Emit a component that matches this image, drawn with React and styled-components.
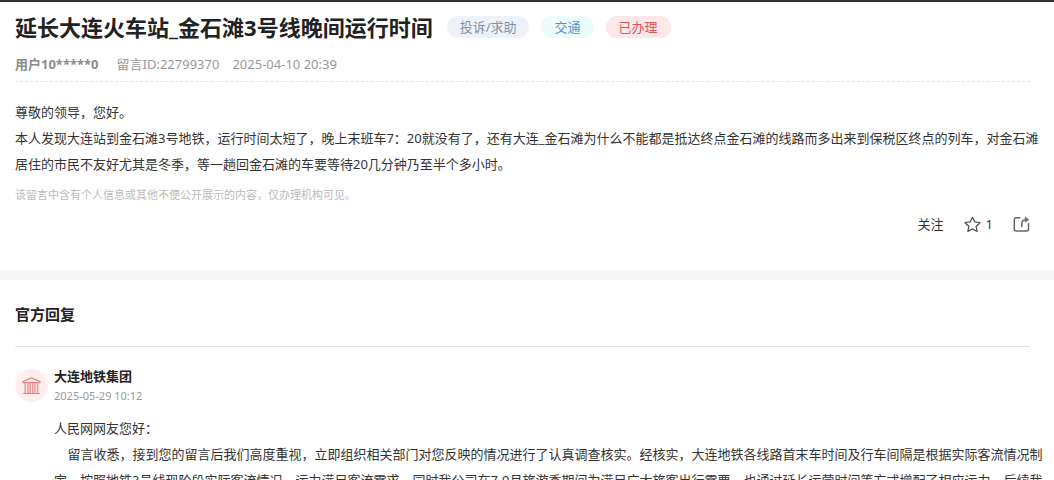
import React from 'react';
import styled, { createGlobalStyle } from 'styled-components';

const GlobalStyle = createGlobalStyle`
  * {
    box-sizing: border-box;
  }

  body {
    margin: 0;
    background: #fff;
    color: #333;
    font-family: "Noto Sans", "Noto Sans CJK SC", sans-serif;
    font-size: 13px;
    line-height: 26px;
  }
`;

// Layout
const Page = styled.main`
  height: 100vh;
  overflow: hidden;
  border-top: 2px solid #333132;
`;

const Message = styled.article`
  padding: 12px 24px 33px 15px;
  border-bottom: 10px solid #f6f7f9;
`;

const TitleRow = styled.header`
  display: flex;
  align-items: center;
  gap: 12px;
`;

const Title = styled.h1`
  margin: 0 2px 0 0;
  color: #222;
  font-size: 22px;
  line-height: 26px;
  font-weight: 700;
`;

const tones = {
  gray: { background: '#eff3f9', color: '#8291a3' },
  cyan: { background: '#ebfcfa', color: '#5a8fd0' },
  red: { background: '#fce8e9', color: '#dc5358' },
};

const Tag = styled.span`
  padding: 0 13px;
  border-radius: 11px;
  line-height: 22px;
  background: ${({ $tone }) => tones[$tone].background};
  color: ${({ $tone }) => tones[$tone].color};
`;

const Meta = styled.div`
  display: flex;
  gap: 13px;
  padding: 11px 0 4px;
  border-bottom: 1px dashed #e8e8e8;
  color: #999;
`;

const UserName = styled.strong`
  margin-right: 5px;
  color: #8c8c8c;
`;

const Text = styled.p`
  margin: 0 -15px 0 0;
  white-space: pre-wrap;
`;

const MessageText = styled(Text)`
  margin: 17px -12px 0 0;
`;

const Hint = styled.p`
  margin: 8px 0 0;
  color: #bbb;
  font-size: 11px;
  line-height: 20px;
`;

const Actions = styled.div`
  display: flex;
  justify-content: flex-end;
  align-items: center;
  gap: 20px;
  margin-top: 6px;
`;

const ActionButton = styled.button`
  display: flex;
  align-items: center;
  gap: 5px;
  padding: 0;
  border: 0;
  background: none;
  color: #333;
  font: inherit;
  cursor: pointer;
`;

const Replies = styled.section`
  padding: 21px 24px 0 15px;
`;

const SectionTitle = styled.h2`
  margin: 0;
  padding-bottom: 19px;
  border-bottom: 1px solid #e3e3e3;
  color: #222;
  font-size: 15px;
  line-height: 26px;
  font-weight: 700;
`;

const Reply = styled.article`
  display: flex;
  gap: 6px;
  padding-top: 19px;
`;

const Avatar = styled.div`
  display: flex;
  flex: none;
  align-items: center;
  justify-content: center;
  width: 33px;
  height: 33px;
  margin-top: 3px;
  border-radius: 50%;
  background: #ffeeed;
`;

const ReplyBody = styled.div`
  flex: 1;
  min-width: 0;
`;

const Department = styled.h3`
  margin: 0;
  color: #222;
  font-size: 13px;
  line-height: 20px;
  font-weight: 700;
`;

const ReplyTime = styled.time`
  display: block;
  margin-bottom: 9px;
  color: #999;
  font-size: 11px;
  line-height: 20px;
`;

// Icons
const StarIcon = () => (
  <svg width="17" height="17" viewBox="0 0 17 17" fill="none" stroke="#555" strokeWidth="1.3" strokeLinejoin="round" aria-hidden="true">
    <path d="M8.5 1.3 10.8 5.9 16 6.7 12.2 10.3 13.1 15.4 8.5 13 3.9 15.4 4.8 10.3 1 6.7 6.2 5.9Z" />
  </svg>
);

const ShareIcon = () => (
  <svg width="17" height="17" viewBox="0 0 17 17" fill="none" stroke="#666" strokeWidth="1.5" strokeLinecap="round" strokeLinejoin="round" aria-hidden="true">
    <path d="M6.8 1.8H3.2Q1.3 1.8 1.3 3.7V13Q1.3 15 3.2 15H13.6Q15.5 15 15.5 13V7.8" />
    <path d="M8.8 10.5V7.6Q8.8 4 12.4 3.7H14" />
    <path d="M12.4 1.2 15.8 3.8 12.4 6Z" fill="#666" strokeWidth="0.6" />
  </svg>
);

const BuildingIcon = () => (
  <svg width="19" height="18" viewBox="0 0 19 18" fill="none" stroke="#e58380" strokeWidth="1.2" aria-hidden="true">
    <path d="M1 5.7V4.5L9.5 1 18 4.5V5.7ZM1 16.5H18M3.2 6V16M6 6V16M8.2 6V16M10.8 6V16M13 6V16M15.8 6V16" />
  </svg>
);

function App() {
  return (
    <>
      <GlobalStyle />
      <Page>
        <Message>
          <TitleRow>
            <Title>延长大连火车站_金石滩3号线晚间运行时间</Title>
            <Tag $tone="gray">投诉/求助</Tag>
            <Tag $tone="cyan">交通</Tag>
            <Tag $tone="red">已办理</Tag>
          </TitleRow>
          <Meta>
            <UserName>用户10*****0</UserName>
            <span>留言ID:22799370</span>
            <time dateTime="2025-04-10T20:39">2025-04-10 20:39</time>
          </Meta>
          <MessageText>
            {'尊敬的领导，您好。\n本人发现大连站到金石滩3号地铁，运行时间太短了，晚上末班车7：20就没有了，还有大连_金石滩为什么不能都是抵达终点金石滩的线路而多出来到保税区终点的列车，对金石滩居住的市民不友好尤其是冬季，等一趟回金石滩的车要等待20几分钟乃至半个多小时。'}
          </MessageText>
          <Hint>该留言中含有个人信息或其他不便公开展示的内容，仅办理机构可见。</Hint>
          <Actions>
            <ActionButton type="button">关注</ActionButton>
            <ActionButton type="button" aria-label="收藏 1">
              <StarIcon />1
            </ActionButton>
            <ActionButton type="button" aria-label="分享">
              <ShareIcon />
            </ActionButton>
          </Actions>
        </Message>
        <Replies>
          <SectionTitle>官方回复</SectionTitle>
          <Reply>
            <Avatar>
              <BuildingIcon />
            </Avatar>
            <ReplyBody>
              <Department>大连地铁集团</Department>
              <ReplyTime dateTime="2025-05-29T10:12">2025-05-29 10:12</ReplyTime>
              <Text>
                {'人民网网友您好：\n    留言收悉，接到您的留言后我们高度重视，立即组织相关部门对您反映的情况进行了认真调查核实。经核实，大连地铁各线路首末车时间及行车间隔是根据实际客流情况制定，按照地铁3号线现阶段实际客流情况，运力满足客流需求，同时我公司在7-9月旅游季期间为满足广大旅客出行需要，也通过延长运营时间等方式增配了相应运力，后续我'}
              </Text>
            </ReplyBody>
          </Reply>
        </Replies>
      </Page>
    </>
  );
}

export default App;
